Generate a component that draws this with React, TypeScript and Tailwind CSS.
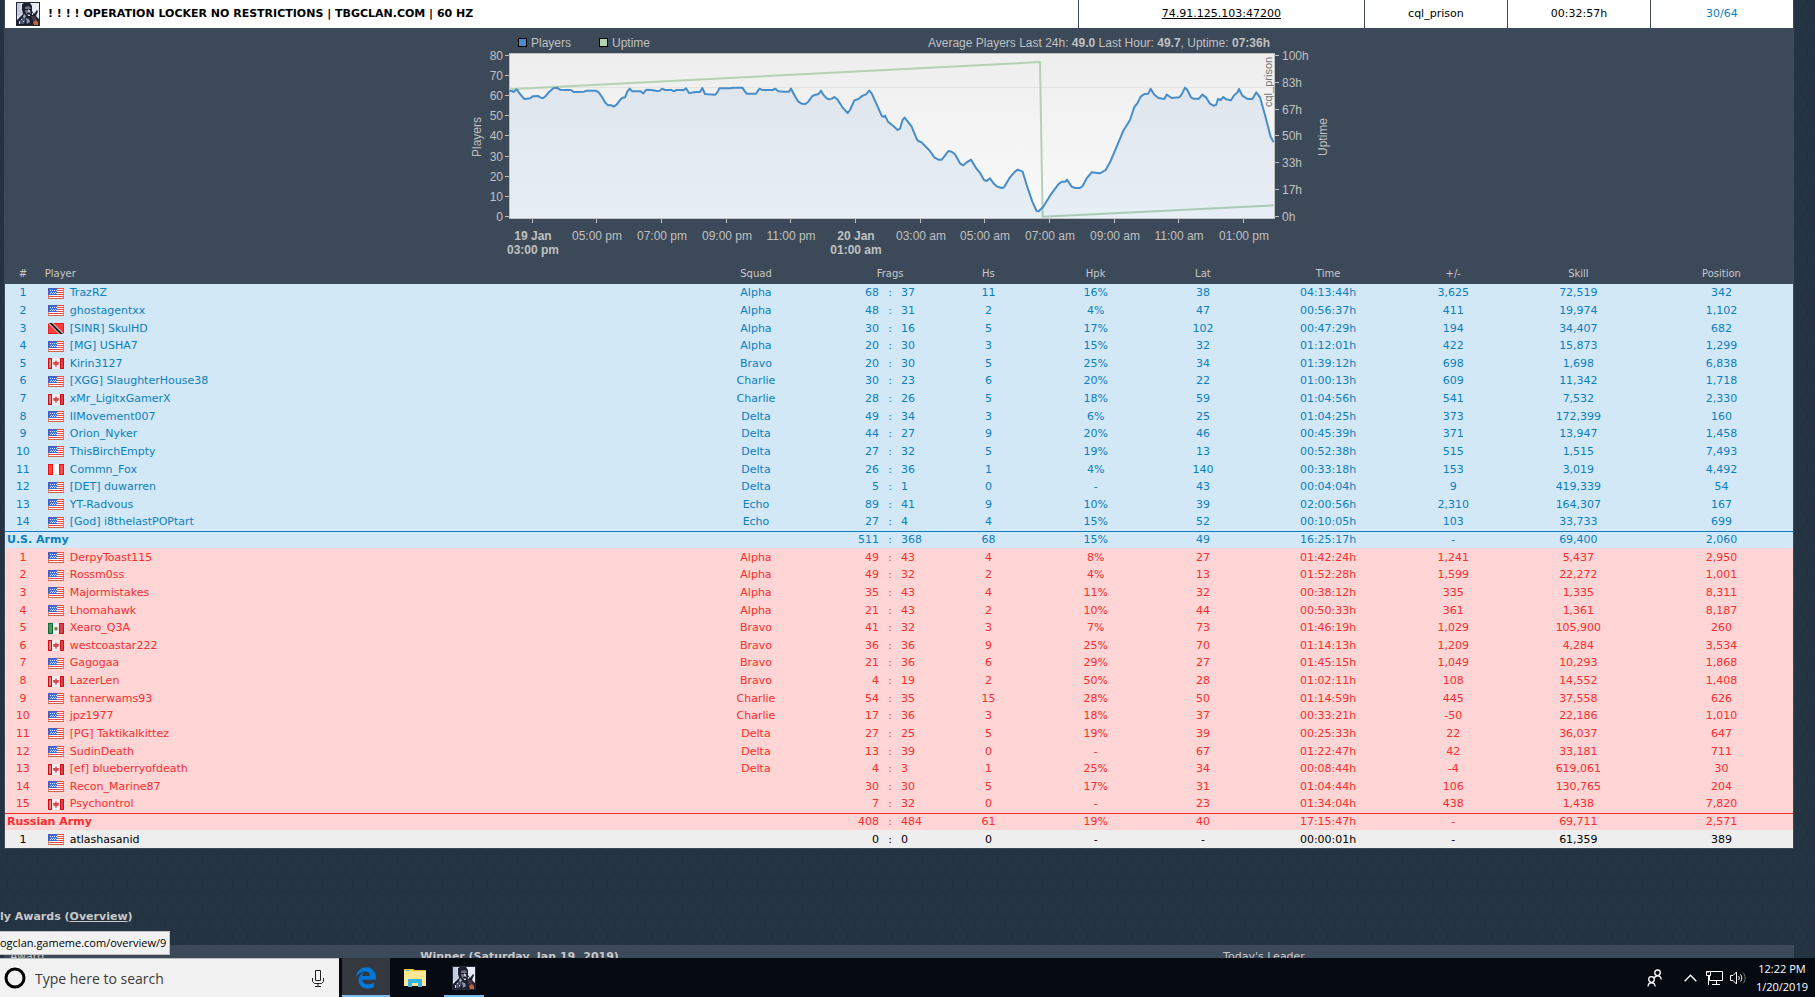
/**
 * Live server view: server header, 24h load chart, scoreboard per team,
 * plus the desktop taskbar at the bottom.
 */

import { FaEdgeLegacy } from 'react-icons/fa';

type Country = 'us' | 'ca' | 'tt' | 'pe' | 'mx';
type TeamKey = 'us' | 'ru' | 'none';

// country, name, squad, frags, deaths, hs, hpk, lat, time, +/-, skill, position
type PlayerRow = [Country, string, string, string, string, string, string, string, string, string, string, string];

interface Team {
  key: TeamKey;
  players: PlayerRow[];
  total?: string[]; // name, then the same columns as a player from frags on
}

const TEAMS: Team[] = [
  {
    key: 'us',
    players: [
      ['us', 'TrazRZ', 'Alpha', '68', '37', '11', '16%', '38', '04:13:44h', '3,625', '72,519', '342'],
      ['us', 'ghostagentxx', 'Alpha', '48', '31', '2', '4%', '47', '00:56:37h', '411', '19,974', '1,102'],
      ['tt', '[SINR] SkulHD', 'Alpha', '30', '16', '5', '17%', '102', '00:47:29h', '194', '34,407', '682'],
      ['us', '[MG] USHA7', 'Alpha', '20', '30', '3', '15%', '32', '01:12:01h', '422', '15,873', '1,299'],
      ['ca', 'Kirin3127', 'Bravo', '20', '30', '5', '25%', '34', '01:39:12h', '698', '1,698', '6,838'],
      ['us', '[XGG] SlaughterHouse38', 'Charlie', '30', '23', '6', '20%', '22', '01:00:13h', '609', '11,342', '1,718'],
      ['ca', 'xMr_LigitxGamerX', 'Charlie', '28', '26', '5', '18%', '59', '01:04:56h', '541', '7,532', '2,330'],
      ['us', 'IIMovement007', 'Delta', '49', '34', '3', '6%', '25', '01:04:25h', '373', '172,399', '160'],
      ['us', 'Orion_Nyker', 'Delta', '44', '27', '9', '20%', '46', '00:45:39h', '371', '13,947', '1,458'],
      ['us', 'ThisBirchEmpty', 'Delta', '27', '32', '5', '19%', '13', '00:52:38h', '515', '1,515', '7,493'],
      ['pe', 'Commn_Fox', 'Delta', '26', '36', '1', '4%', '140', '00:33:18h', '153', '3,019', '4,492'],
      ['us', '[DET] duwarren', 'Delta', '5', '1', '0', '-', '43', '00:04:04h', '9', '419,339', '54'],
      ['us', 'YT-Radvous', 'Echo', '89', '41', '9', '10%', '39', '02:00:56h', '2,310', '164,307', '167'],
      ['us', '[God] i8thelastPOPtart', 'Echo', '27', '4', '4', '15%', '52', '00:10:05h', '103', '33,733', '699'],
    ],
    total: ['U.S. Army', '511', '368', '68', '15%', '49', '16:25:17h', '-', '69,400', '2,060'],
  },
  {
    key: 'ru',
    players: [
      ['us', 'DerpyToast115', 'Alpha', '49', '43', '4', '8%', '27', '01:42:24h', '1,241', '5,437', '2,950'],
      ['us', 'Rossm0ss', 'Alpha', '49', '32', '2', '4%', '13', '01:52:28h', '1,599', '22,272', '1,001'],
      ['us', 'Majormistakes', 'Alpha', '35', '43', '4', '11%', '32', '00:38:12h', '335', '1,335', '8,311'],
      ['us', 'Lhomahawk', 'Alpha', '21', '43', '2', '10%', '44', '00:50:33h', '361', '1,361', '8,187'],
      ['mx', 'Xearo_Q3A', 'Bravo', '41', '32', '3', '7%', '73', '01:46:19h', '1,029', '105,900', '260'],
      ['ca', 'westcoastar222', 'Bravo', '36', '36', '9', '25%', '70', '01:14:13h', '1,209', '4,284', '3,534'],
      ['us', 'Gagogaa', 'Bravo', '21', '36', '6', '29%', '27', '01:45:15h', '1,049', '10,293', '1,868'],
      ['ca', 'LazerLen', 'Bravo', '4', '19', '2', '50%', '28', '01:02:11h', '108', '14,552', '1,408'],
      ['us', 'tannerwams93', 'Charlie', '54', '35', '15', '28%', '50', '01:14:59h', '445', '37,558', '626'],
      ['us', 'jpz1977', 'Charlie', '17', '36', '3', '18%', '37', '00:33:21h', '-50', '22,186', '1,010'],
      ['us', '[PG] Taktikalkittez', 'Delta', '27', '25', '5', '19%', '39', '00:25:33h', '22', '36,037', '647'],
      ['us', 'SudinDeath', 'Delta', '13', '39', '0', '-', '67', '01:22:47h', '42', '33,181', '711'],
      ['ca', '[ef] blueberryofdeath', 'Delta', '4', '3', '1', '25%', '34', '00:08:44h', '-4', '619,061', '30'],
      ['us', 'Recon_Marine87', '', '30', '30', '5', '17%', '31', '01:04:44h', '106', '130,765', '204'],
      ['ca', 'Psychontrol', '', '7', '32', '0', '-', '23', '01:34:04h', '438', '1,438', '7,820'],
    ],
    total: ['Russian Army', '408', '484', '61', '19%', '40', '17:15:47h', '-', '69,711', '2,571'],
  },
  {
    key: 'none',
    players: [['us', 'atlashasanid', '', '0', '0', '0', '-', '-', '00:00:01h', '-', '61,359', '389']],
  },
];

const TEAM_ROW: Record<TeamKey, string> = {
  us: 'bg-[#d2e8f6] text-[#0a7fc0]',
  ru: 'bg-[#ffd5d5] text-[#fb2d2d]',
  none: 'bg-[#eeeeee] text-black',
};

const TEAM_TOTAL: Record<TeamKey, string> = {
  us: 'border-t border-[#0a7fc0]',
  ru: 'border-t border-[#fb2d2d]',
  none: '',
};

function Flag({ country }: { country: Country }) {
  return (
    <svg width="16" height="11" viewBox="0 0 16 11" className="shrink-0" role="img" aria-label={country}>
      {country === 'us' && (
        <>
          <rect width="16" height="11" fill="#fff" />
          <path d="M0 .5H16M0 2.5H16M0 4.5H16M0 6.5H16M0 8.5H16M0 10.5H16" stroke="#ee4a4a" />
          <path d="M.5 6V11M15.5 0V11M0 10.5H16" stroke="#c8704a" opacity=".7" />
          <rect width="9" height="7" fill="#3b6fe0" />
          <path d="M0 .5H9M.5 0V7" stroke="#4a5cb8" />
          <path d="M2 2.5H9M3 4.5H9M2 5.5H9" stroke="#cfdcff" strokeDasharray="1 1" />
        </>
      )}
      {country === 'ca' && (
        <>
          <rect width="16" height="11" fill="#f6eeee" />
          <path d="M0 0H4V11H0ZM12 0H16V11H12Z" fill="#e04048" />
          <path d="M.5 .5H3.5V10.5H.5ZM12.5 .5H15.5V10.5H12.5Z" fill="none" stroke="#c81018" />
          <path d="M1.5 1.5H3V9.500H1.5Z" fill="#f08a8a" />
          <path d="M8 2L9 4L11 4L10.500 6.500L8.500 7.500V9H7.500V7.500L5.500 6.500L5 4L7 4Z" fill="#e0444e" />
        </>
      )}
      {country === 'tt' && (
        <>
          <rect width="16" height="11" fill="#ee1c1c" />
          <rect x="1" y="1" width="14" height="9" fill="#ff4040" />
          <path d="M0 0H5L16 11H11Z" fill="#fff" />
          <path d="M1 0H4L15 11H12Z" fill="#1c1c1c" />
        </>
      )}
      {country === 'pe' && (
        <>
          <rect width="16" height="11" fill="#fff" />
          <path d="M0 0H5V11H0ZM11 0H16V11H11Z" fill="#f01010" />
          <path d="M1 1H4V10H1ZM12 1H15V10H12Z" fill="#ff4646" />
        </>
      )}
      {country === 'mx' && (
        <>
          <rect width="16" height="11" fill="#f1f1f1" />
          <path d="M0 0H5V11H0Z" fill="#0f6a35" />
          <path d="M1 1H4V10H1Z" fill="#4a9a68" />
          <path d="M11 0H16V11H11Z" fill="#c01822" />
          <path d="M12 1H15V10H12Z" fill="#e0404a" />
          <path d="M7 4H9L10 6L8 8L6 6Z" fill="#8a7a5a" />
        </>
      )}
    </svg>
  );
}

// Battlefield 4 soldier tile
function GameIcon() {
  return (
    <svg width="24" height="24" viewBox="0 0 24 24" className="shrink-0" role="img" aria-label="Battlefield 4">
      <rect width="24" height="24" fill="#252a38" />
      <rect x="1" y="1" width="22" height="22" fill="#e8ecf4" />
      <path d="M1 1H5L6 12L3 15L1 14Z" fill="#c3cbdc" />
      <path d="M6 2L8 1H14L16 4L16 9L18 12L21 8L22 9L20 14L23 17V23H1V18L4 15L7 12L6 8Z" fill="#1d1f2e" />
      <path d="M9 5L13 4L15 6L14 8L15 11L13 14L10 12L9 9Z" fill="#6d6f84" />
      <path d="M9 7H12V8H9ZM13 7H15V8H13ZM11 11H14V12H11Z" fill="#14141f" />
      <path d="M12 8H14L14 10L12 10Z" fill="#c9c4cf" />
      <path d="M4 18L8 14L10 17L8 22H4Z" fill="#4b526b" />
      <path d="M8 12L10 14L9 16L7 15Z" fill="#aab0c4" />
      <path d="M10 16L13 17L14 20L11 22Z" fill="#8d92a8" />
      <path d="M15 14L19 14L21 18L17 19Z" fill="#43394a" />
      <path d="M17 20L20 18L22 20V23H18Z" fill="#c0643f" />
      <path d="M3 19H4V22H3ZM12 13H14V14H12ZM7 19H8V20H7ZM16 11H17V13H16ZM5 17H6V18H5Z" fill="#d7dbe6" />
    </svg>
  );
}

/* ---------- chart ---------- */

const PLAYERS_LINE =
  '148,198 155,198 161,201 170,193 181,208 193,222 200,221 211,220 218,214 235,213 242,218 250,219 258,212 268,200 280,190 290,188 300,194 320,195 333,195 341,201 372,200 380,197 408,197 416,202 426,216 436,233 444,241 452,240 461,245 470,239 477,229 486,219 495,217 502,200 509,191 517,199 542,199 550,205 559,194 575,195 590,198 600,197 606,191 615,195 635,195 641,199 650,195 665,195 671,196 678,190 687,204 695,203 705,201 720,201 727,189 735,207 745,208 766,209 772,202 778,190 810,190 820,188 847,188 853,197 860,206 888,206 893,198 899,191 906,195 938,195 946,191 955,199 975,200 987,200 993,191 1003,210 1015,230 1025,236 1036,237 1045,230 1057,213 1067,209 1076,207 1083,197 1090,209 1100,220 1108,223 1117,220 1123,216 1132,223 1140,235 1148,248 1163,264 1170,255 1183,226 1195,222 1208,212 1218,208 1228,197 1235,205 1250,238 1265,272 1270,276 1275,272 1284,290 1300,303 1313,315 1320,311 ' +
  '1328,284 1334,278 1355,305 1370,342 1375,348 1385,352 1410,378 1423,397 1435,404 1445,404 1455,392 1465,378 1475,380 1485,388 1500,415 1510,421 1520,412 1533,404 1550,432 1560,443 1572,465 1580,468 1590,460 1600,474 1610,484 1625,489 1632,487 1650,457 1665,440 1673,434 1688,440 1700,480 1717,530 1730,558 1736,559 1750,545 1770,512 1795,478 1805,470 1816,470 1821,464 1835,485 1845,489 1860,489 1868,483 1880,460 1895,442 1920,445 1937,435 1950,412 1970,365 1990,317 2010,285 2023,246 2032,235 2042,215 2053,207 2065,206 2072,191 2082,208 2095,219 2113,222 2120,209 2135,219 2158,217 2165,208 2175,188 2182,195 2193,217 2200,221 2217,221 2227,209 2238,217 2250,236 2260,242 2268,240 2274,222 2282,225 2290,216 2298,223 2313,226 2323,210 2332,203 2337,192 2347,212 2363,222 2377,222 2383,212 2389,202 2400,217 2415,270 2432,335 2441,352';

const LEFT_AXIS: [string, number][] = [
  ['80', 55], ['70', 75], ['60', 95], ['50', 115], ['40', 135], ['30', 156], ['20', 176], ['10', 196], ['0', 216],
];

const RIGHT_AXIS: [string, number][] = [
  ['100h', 55], ['83h', 82], ['67h', 109], ['50h', 135], ['33h', 162], ['17h', 189], ['0h', 216],
];

const TIME_AXIS: [string, number, string?][] = [
  ['19 Jan', 532, '03:00 pm'],
  ['05:00 pm', 596],
  ['07:00 pm', 661],
  ['09:00 pm', 726],
  ['11:00 pm', 790],
  ['20 Jan', 855, '01:00 am'],
  ['03:00 am', 920],
  ['05:00 am', 984],
  ['07:00 am', 1049],
  ['09:00 am', 1114],
  ['11:00 am', 1178],
  ['01:00 pm', 1243],
];

function LoadChart() {
  return (
    <svg
      width="900"
      height="236"
      viewBox="449 28 900 236"
      className="font-['Liberation_Sans',Arial,sans-serif] text-[12px]"
      role="img"
      aria-label="Players and uptime, last 24 hours"
    >
      <defs>
        <linearGradient id="plot" x1="0" y1="0" x2="0" y2="1">
          <stop offset="0" stopColor="#eeeeee" />
          <stop offset="1" stopColor="#fafafa" />
        </linearGradient>
      </defs>

      {/* legend */}
      <rect x="518.5" y="38.5" width="8" height="8" fill="#478dca" stroke="#000" />
      <rect x="599.5" y="38.5" width="8" height="8" fill="#b3d3b0" stroke="#000" />
      <g fill="#c0c0c0">
        <text x="531" y="47">Players</text>
        <text x="612" y="47">Uptime</text>
        <text x="1270" y="47" textAnchor="end">
          Average Players Last 24h: <tspan fontWeight="bold">49.0</tspan> Last Hour:{' '}
          <tspan fontWeight="bold">49.7</tspan>, Uptime: <tspan fontWeight="bold">07:36h</tspan>
        </text>
      </g>

      <rect x="509.5" y="53.5" width="765" height="165" fill="url(#plot)" stroke="#c0c0c0" />
      <path d="M510 87.5H1274" stroke="#e2e2e2" />
      <text transform="translate(1272 107) rotate(-90)" fontSize="11" fill="#777">
        cql_prison
      </text>

      {/* series, in thirds of a pixel */}
      <g transform="translate(460 25) scale(.33333)" fill="none" strokeLinejoin="round">
        <polyline points="148,193 1740,111 1748,575 2441,541" stroke="#b3d3b0" strokeWidth="6" />
        <polygon points={`148,578 ${PLAYERS_LINE} 2441,578`} fill="#478dca" fillOpacity=".1" />
        <polyline points={PLAYERS_LINE} stroke="#478dca" strokeWidth="6" />
      </g>

      {/* axes */}
      <g fill="#c0c0c0">
        {LEFT_AXIS.map(([label, y]) => (
          <g key={label}>
            <path d={`M505 ${y}.5H509`} stroke="#c0c0c0" />
            <text x="503" y={y + 5} textAnchor="end">{label}</text>
          </g>
        ))}
        {RIGHT_AXIS.map(([label, y]) => (
          <g key={label}>
            <path d={`M1275 ${y}.5H1279`} stroke="#c0c0c0" />
            <text x="1282" y={y + 5}>{label}</text>
          </g>
        ))}
        {TIME_AXIS.map(([label, x, second]) => (
          <g key={x} textAnchor="middle" fontWeight={second ? 'bold' : 'normal'}>
            <path d={`M${x}.5 219V223`} stroke="#c0c0c0" />
            <text x={x + 1} y="240">{label}</text>
            {second && <text x={x + 1} y="254">{second}</text>}
          </g>
        ))}
        <text transform="translate(481 137) rotate(-90)" textAnchor="middle">Players</text>
        <text transform="translate(1327 137) rotate(-90)" textAnchor="middle">Uptime</text>
      </g>
    </svg>
  );
}

/* ---------- scoreboard ---------- */

function Frags({ kills, deaths }: { kills: string; deaths: string }) {
  return (
    <div className="flex">
      <span className="flex-1 text-right">{kills}</span>
      <span className="w-[22px] text-center">:</span>
      <span className="flex-1 text-left">{deaths}</span>
    </div>
  );
}

function Scoreboard() {
  return (
    <table className="h-[584px] w-full table-fixed border-collapse text-center text-[11px] leading-4">
      <colgroup>
        <col className="w-[2%]" />
        <col className="w-[35%]" />
        <col className="w-[10%]" />
        <col className="w-[5%]" />
        <col className="w-[6%]" />
        <col className="w-[6%]" />
        <col className="w-[6%]" />
        <col className="w-[8%]" />
        <col className="w-[6%]" />
        <col className="w-[8%]" />
        <col className="w-[8%]" />
      </colgroup>
      <thead>
        <tr className="h-5 text-[10px] text-[#c8c8c8]">
          <th className="p-0 font-normal">#</th>
          <th className="p-0 pl-1 text-left font-normal">Player</th>
          {['Squad', 'Frags', 'Hs', 'Hpk', 'Lat', 'Time', '+/-', 'Skill', 'Position'].map((h) => (
            <th key={h} className="p-0 font-normal">{h}</th>
          ))}
        </tr>
      </thead>
      {TEAMS.map((team) => (
        <tbody key={team.key} className={TEAM_ROW[team.key]}>
          {team.players.map(([country, name, squad, kills, deaths, ...rest], i) => (
            <tr key={name}>
              <td className="p-0 pt-px">{i + 1}</td>
              <td className="p-0 pt-px pl-[7px] text-left">
                <div className="flex items-center gap-1.5">
                  <Flag country={country} />
                  <a href="#player">{name}</a>
                </div>
              </td>
              <td className="p-0 pt-px">{squad}</td>
              <td className="p-0 pt-px"><Frags kills={kills} deaths={deaths} /></td>
              {rest.map((value, n) => (
                <td key={n} className="p-0 pt-px">{value}</td>
              ))}
            </tr>
          ))}
          {team.total && (
            <tr className={TEAM_TOTAL[team.key]}>
              <td colSpan={3} className="p-0 pl-0.5 text-left font-bold">{team.total[0]}</td>
              <td className="p-0"><Frags kills={team.total[1]} deaths={team.total[2]} /></td>
              {team.total.slice(3).map((value, n) => (
                <td key={n} className="p-0">{value}</td>
              ))}
            </tr>
          )}
        </tbody>
      ))}
    </table>
  );
}

function ServerHeader() {
  const cell = 'flex items-center justify-center border-l border-[#3b4959]';
  return (
    <div className="grid h-7 grid-cols-[60fr_16fr_8fr_8fr_8fr] bg-white text-[11px] text-black">
      <div className="flex items-center gap-2 pl-[11px] font-bold">
        <GameIcon />
        <h1>! ! ! ! OPERATION LOCKER NO RESTRICTIONS | TBGCLAN.COM | 60 HZ</h1>
      </div>
      <div className={cell}><a href="#join" className="underline">74.91.125.103:47200</a></div>
      <div className={cell}>cql_prison</div>
      <div className={cell}>00:32:57h</div>
      <div className={`${cell} text-[#0a7fc0]`}>30/64</div>
    </div>
  );
}

function HexBackground() {
  return (
    <svg className="absolute inset-0 h-full w-full" aria-hidden="true">
      <pattern id="hex" width="15" height="26" patternUnits="userSpaceOnUse">
        <path
          d="M7.500 0V4.300L15 8.700V17.300L7.500 21.700V26M7.500 4.300L0 8.700V17.300L7.500 21.700"
          fill="none"
          stroke="#21303d"
        />
      </pattern>
      <rect width="100%" height="100%" fill="url(#hex)" />
    </svg>
  );
}

/* ---------- taskbar ---------- */

function Taskbar() {
  return (
    <footer className="flex h-[39px] shrink-0 bg-[#050a11] font-['Open_Sans','Noto_Sans',sans-serif] text-white">
      <label className="flex w-[339px] items-center border-t border-[#bdbdbd] bg-[#f2f2f2] pl-1 pr-[15px]">
        <svg width="22" height="22" viewBox="0 0 22 22" fill="none" aria-hidden="true">
          <circle cx="11" cy="11" r="9" stroke="#000" strokeWidth="3" />
        </svg>
        <input
          type="text"
          aria-label="Search"
          placeholder="Type here to search"
          className="min-w-0 flex-1 bg-transparent pl-[9px] text-[14px] outline-none placeholder:text-[#3a3a3a]"
        />
        <svg width="12" height="17" viewBox="0 0 12 17" fill="none" stroke="#222" aria-hidden="true">
          <path d="M3.500 .5H8.500V10.500H3.500ZM.5 8V11.500L2.500 13.500H9.500L11.500 11.500V8M6 13.500V16M3 16.500H9" />
        </svg>
      </label>
      <nav className="ml-[3px] flex">
        <button aria-label="Edge" className="flex w-12 items-center justify-center border-b-2 border-[#76b9ed] bg-[#35383e] pt-0.5">
          <FaEdgeLegacy size={22} color="#0078d7" />
        </button>
        <button aria-label="File Explorer" className="flex w-[50px] items-center justify-center">
          <svg width="22" height="18" viewBox="0 0 22 18">
            <path d="M0 0H9L11 1H22V17H0Z" fill="#e9b93a" />
            <path d="M0 2H22V17H0Z" fill="#ffe793" />
            <path d="M1 0H9V2H1Z" fill="#ffd23c" />
            <path d="M2 1H5V2H2Z" fill="#4cc0ee" />
            <path d="M4 10H18V18H14V14H8V18H4Z" fill="#35b4ea" />
          </svg>
        </button>
        <button aria-label="Battlefield 4" className="mx-1 flex w-10 items-center justify-center border-b-2 border-[#76b9ed] pt-0.5">
          <GameIcon />
        </button>
      </nav>
      <div className="ml-auto flex items-center pr-[7px]">
        <svg width="15" height="18" viewBox="0 0 15 18" fill="none" stroke="#fff" strokeWidth="1.3" aria-hidden="true">
          <circle cx="10.500" cy="3.800" r="2.800" />
          <circle cx="4.500" cy="10.500" r="2.800" />
          <path d="M7.500 9C8 6.500 13.500 5.500 14.200 10.500M1 17.500C1.500 12.500 7.500 12.500 8.200 17.500" />
        </svg>
        <svg width="13" height="8" viewBox="0 0 13 8" fill="none" stroke="#fff" strokeWidth="1.4" className="ml-[22px]" aria-hidden="true">
          <path d="M.7 7.200L6.500 1.200L12.300 7.200" />
        </svg>
        <svg width="17" height="16" viewBox="0 0 17 16" fill="none" stroke="#fff" className="ml-[9px]" aria-hidden="true">
          <path d="M5 1.500H16.500V10.500H3.500V6M10.500 11V14.500M6 14.500H14M.5 1.500H4.500V5.500H.5ZM2.500 5.500V15M2 1V3" />
        </svg>
        <svg width="16" height="14" viewBox="0 0 16 14" fill="none" stroke="#fff" className="ml-[7px]" aria-hidden="true">
          <path d="M.5 4.500H3L6.500 1V13L3 9.500H.5Z" />
          <path d="M8.500 5C9.500 6.500 9.500 7.500 8.500 9M10.500 3.500C12.200 5.500 12.200 8.500 10.500 10.500" />
          <path d="M13 1.500C15.800 4.500 15.800 9.500 13 12.500" stroke="#777" />
        </svg>
        <div className="ml-[10px] text-center text-[11px] leading-[18px]">
          <div>12:22 PM</div>
          <div>1/20/2019</div>
        </div>
      </div>
    </footer>
  );
}

export default function App() {
  return (
    <div className="flex h-screen flex-col overflow-hidden bg-[#253443] font-['DejaVu_Sans',Verdana,sans-serif]">
      <main className="relative min-h-0 flex-1 overflow-hidden">
        <HexBackground />
        <div className="relative">
          <section className="ml-1 mr-[21px] bg-[#3b4959] px-px pb-px">
            <ServerHeader />
            <div className="flex justify-center">
              <LoadChart />
            </div>
            <Scoreboard />
          </section>

          <h2 className="pt-[60px] text-[11px] leading-4 font-bold text-[#c8c8c8]">
            ly Awards (<a href="#overview" className="underline">Overview</a>)
          </h2>
          <div className="ml-1 mr-[21px] mt-5 flex bg-[#3b4959] pt-0.5 pb-2 pl-1.5 text-[11px] leading-5 text-[#c8c8c8]">
            <div className="w-[23%]">Award</div>
            <div className="w-[45%] font-bold">Winner (Saturday, Jan 19, 2019)</div>
            <div>Today&apos;s Leader</div>
          </div>
        </div>

        {/* link preview of the browser */}
        <div className="absolute bottom-[3px] left-0 border border-l-0 border-[#c0c0c0] bg-[#f2f2f2] pr-[3px] font-['Open_Sans','Noto_Sans',sans-serif] text-[11px] leading-[22px] text-black">
          ogclan.gameme.com/overview/9
        </div>
      </main>
      <Taskbar />
    </div>
  );
}
